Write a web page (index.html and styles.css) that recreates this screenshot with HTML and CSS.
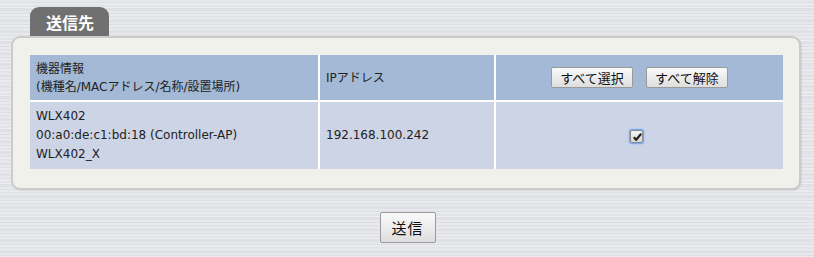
FILE: index.html
```html
<!DOCTYPE html>
<html lang="ja">
<head>
	<meta charset="UTF-8">
	<title>送信先</title>
	<link rel="stylesheet" href="styles.css">
</head>
<body>
<div class="tab">送信先</div>
<div class="panel">
	<table class="dest">
		<tr class="head">
			<td class="c1">機器情報<br>(機種名/MACアドレス/名称/設置場所)</td>
			<td class="c2">IPアドレス</td>
			<td class="c3">
				<button type="button" class="btn">すべて選択</button>
				<button type="button" class="btn">すべて解除</button>
			</td>
		</tr>
		<tr class="row">
			<td class="c1">WLX402<br>00:a0:de:c1:bd:18 (Controller-AP)<br>WLX402_X</td>
			<td class="c2">192.168.100.242</td>
			<td class="c3">
				<span class="chk"><svg width="9" height="8" viewBox="0 0 9 8"><path d="M0.8 4.2 L3.2 6.8 L8.2 0.8" fill="none" stroke="#222" stroke-width="2.2"/></svg></span>
			</td>
		</tr>
	</table>
</div>
<div class="send">
	<button type="submit" class="btn big">送信</button>
</div>
</body>
</html>
```

FILE: styles.css
```css
html {
	background: #e3e5e9;
}
body {
	margin: 0;
	height: 257px;
	font-family: "DejaVu Sans", "Noto Sans CJK JP", sans-serif;
	font-size: 12px;
	color: #222;
	background: repeating-linear-gradient(180deg,
		#e6e8eb 0px, #e6e8eb 2px,
		#dcdee2 2px, #dcdee2 3px,
		#e9ebee 3px, #e9ebee 5px,
		#e1e3e7 5px, #e1e3e7 7px,
		#eceef0 7px, #eceef0 8px,
		#dfe1e5 8px, #dfe1e5 11px);
	overflow: hidden;
}
.tab {
	display: inline-block;
	margin: 7px 0 0 30px;
	width: 79px;
	height: 29px;
	line-height: 30px;
	box-sizing: border-box;
	padding-left: 16px;
	background: #707070;
	border-radius: 9px 9px 0 0;
	color: #fff;
	font-family: "Noto Sans CJK JP", sans-serif;
	font-weight: bold;
	font-size: 16px;
	vertical-align: top;
}
.panel {
	margin: 0 13px 0 11px;
	height: 154px;
	box-sizing: border-box;
	padding: 17px 16px 0 17px;
	background: #f1f1ec;
	border: 2px solid #cbcbcb;
	border-radius: 9px;
	box-shadow: 1px 1px 1px rgba(0,0,0,0.08);
}
.dest {
	width: 100%;
	border-collapse: collapse;
	border-style: hidden;
}
.dest td {
	border: 2px solid #fff;
	padding: 0 6px;
	line-height: 18px;
	vertical-align: middle;
}
.head td {
	height: 45px;
	background: #a3b9d5;
}
.row td {
	height: 67px;
	line-height: 19px;
	background: #cdd4e5;
}
.c1 {
	width: 276px;
}
.c2 {
	width: 162px;
}
.c3 {
	text-align: center;
}
.btn {
	font-family: "Noto Sans CJK JP", sans-serif;
	font-size: 13px;
	color: #111;
	height: 21px;
	width: 82px;
	padding: 0;
	line-height: 18px;
	border: 1px solid #9a9a9a;
	border-radius: 2px;
	background: linear-gradient(#fafafa, #dedede);
	cursor: pointer;
}
.btn + .btn {
	margin-left: 9px;
}
.chk {
	display: inline-block;
	width: 11px;
	height: 11px;
	margin: 2px 6px 0 0;
	border: 1px solid #8a8a8a;
	border-radius: 2px;
	background: linear-gradient(#f4f4f4, #d6d6d6);
	box-shadow: 0 0 0 1px #7fa6ea, 0 0 1px 2px #b4cdf4;
	vertical-align: middle;
	line-height: 0;
}
.chk svg {
	margin-top: 2px;
	margin-left: 1px;
}
.send {
	text-align: center;
	margin-top: 22px;
	padding-left: 1px;
}
.big {
	width: 56px;
	height: 31px;
	font-size: 15px;
	letter-spacing: 1px;
}
```
